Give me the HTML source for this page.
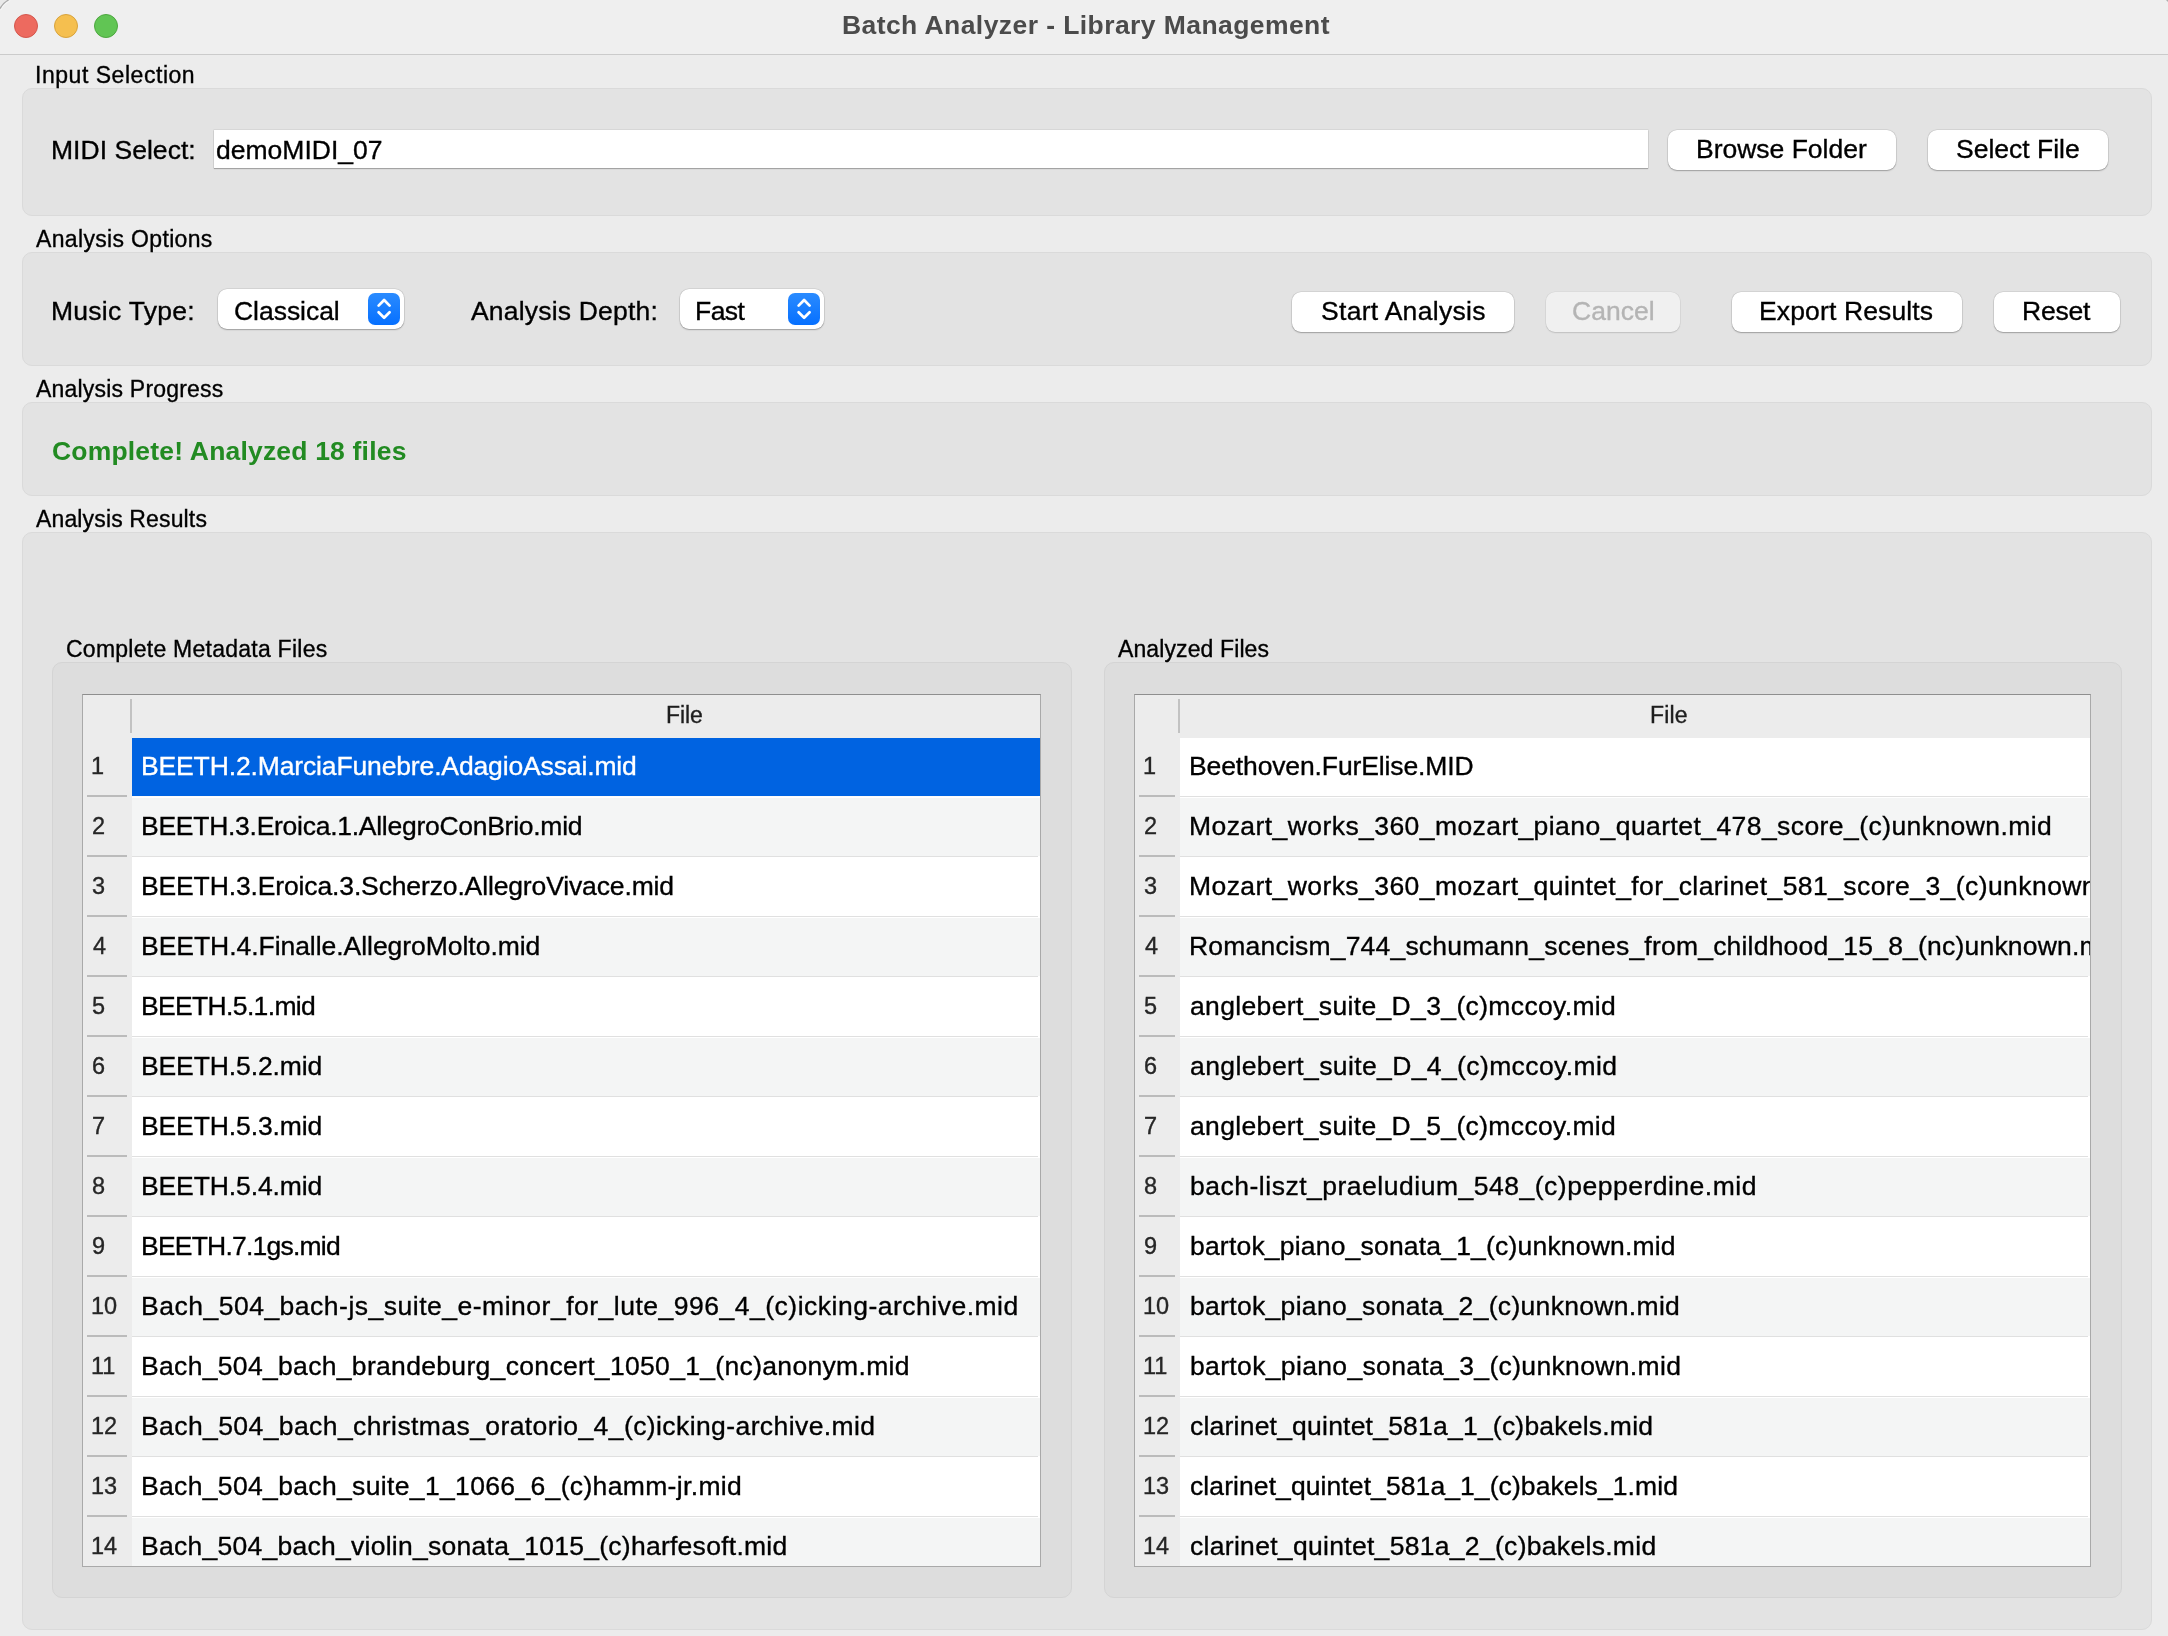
<!DOCTYPE html>
<html><head><meta charset="utf-8"><style>
html,body{margin:0;padding:0}
body{width:2168px;height:1636px;overflow:hidden;position:relative;background:#ececec;font-family:"Liberation Sans",sans-serif}
.t{position:absolute;white-space:nowrap;line-height:normal;will-change:transform;-webkit-text-stroke:0.35px currentColor}
</style></head><body>
<div style="position:absolute;left:0px;top:0px;width:2168px;height:54px;background:#efefef"></div>
<div style="position:absolute;left:0px;top:54px;width:2168px;height:1px;background:#cbcbcb"></div>
<svg style="position:absolute;left:0;top:0" width="24" height="24" viewBox="0 0 24 24"><path d="M0 0 H8.6 A20 20 0 0 0 0 8.6 Z" fill="#e9e9e9"/><path d="M8.6 0 A20 20 0 0 0 0 8.6" fill="none" stroke="#a9a9a9" stroke-width="1.3"/><path d="M10.2 0.6 A19 19 0 0 0 0.6 10.2" fill="none" stroke="#f7f7f7" stroke-width="0.9"/></svg>
<svg style="position:absolute;left:2158px;top:0" width="10" height="10" viewBox="0 0 10 10"><path d="M8.7 0 A20 20 0 0 1 10 1.3 V0 Z" fill="#e9e9e9"/><path d="M8.7 0 A20 20 0 0 1 10 1.3" fill="none" stroke="#a9a9a9" stroke-width="1.3"/></svg>
<div style="position:absolute;left:14px;top:14px;width:24px;height:24px;border-radius:50%;background:#ed6a5f;box-sizing:border-box;border:1px solid #d4574d"></div>
<div style="position:absolute;left:54px;top:14px;width:24px;height:24px;border-radius:50%;background:#f5bf4f;box-sizing:border-box;border:1px solid #d8a33c"></div>
<div style="position:absolute;left:94px;top:14px;width:24px;height:24px;border-radius:50%;background:#61c554;box-sizing:border-box;border:1px solid #4da73f"></div>
<div style="position:absolute;left:22px;top:88px;width:2130px;height:128px;box-sizing:border-box;border:1px solid #dadada;border-radius:10px;background:#e3e3e3"></div>
<div style="position:absolute;left:22px;top:252px;width:2130px;height:114px;box-sizing:border-box;border:1px solid #dadada;border-radius:10px;background:#e3e3e3"></div>
<div style="position:absolute;left:22px;top:402px;width:2130px;height:94px;box-sizing:border-box;border:1px solid #dadada;border-radius:10px;background:#e3e3e3"></div>
<div style="position:absolute;left:22px;top:532px;width:2130px;height:1098px;box-sizing:border-box;border:1px solid #dadada;border-radius:10px;background:#e3e3e3"></div>
<div style="position:absolute;left:52px;top:662px;width:1020px;height:936px;box-sizing:border-box;border:1px solid #d4d4d4;border-radius:10px;background:#dddddd"></div>
<div style="position:absolute;left:1104px;top:662px;width:1018px;height:936px;box-sizing:border-box;border:1px solid #d4d4d4;border-radius:10px;background:#dddddd"></div>
<div style="position:absolute;left:214px;top:130px;width:1434px;height:38px;background:#fff;box-shadow:0 0 0 0.5px rgba(0,0,0,0.10), 0 1px 1px rgba(0,0,0,0.24)"></div>
<div style="position:absolute;left:1668px;top:130px;width:228px;height:40px;border-radius:9px;background:#fff;box-shadow:0 0 0 0.5px rgba(0,0,0,0.10),0 1px 1.5px rgba(0,0,0,0.26),0 0 2px rgba(0,0,0,0.06)"></div>
<div style="position:absolute;left:1928px;top:130px;width:180px;height:40px;border-radius:9px;background:#fff;box-shadow:0 0 0 0.5px rgba(0,0,0,0.10),0 1px 1.5px rgba(0,0,0,0.26),0 0 2px rgba(0,0,0,0.06)"></div>
<div style="position:absolute;left:1292px;top:292px;width:222px;height:40px;border-radius:9px;background:#fff;box-shadow:0 0 0 0.5px rgba(0,0,0,0.10),0 1px 1.5px rgba(0,0,0,0.26),0 0 2px rgba(0,0,0,0.06)"></div>
<div style="position:absolute;left:1546px;top:292px;width:134px;height:40px;border-radius:9px;background:#f0f0f0;box-shadow:0 0 0 0.5px rgba(0,0,0,0.06),0 1px 1.5px rgba(0,0,0,0.13)"></div>
<div style="position:absolute;left:1732px;top:292px;width:230px;height:40px;border-radius:9px;background:#fff;box-shadow:0 0 0 0.5px rgba(0,0,0,0.10),0 1px 1.5px rgba(0,0,0,0.26),0 0 2px rgba(0,0,0,0.06)"></div>
<div style="position:absolute;left:1994px;top:292px;width:126px;height:40px;border-radius:9px;background:#fff;box-shadow:0 0 0 0.5px rgba(0,0,0,0.10),0 1px 1.5px rgba(0,0,0,0.26),0 0 2px rgba(0,0,0,0.06)"></div>
<div style="position:absolute;left:218px;top:289px;width:186px;height:40px;border-radius:9px;background:#fff;box-shadow:0 0 0 0.5px rgba(0,0,0,0.10),0 1px 1.5px rgba(0,0,0,0.26),0 0 2px rgba(0,0,0,0.06)"></div>
<div style="position:absolute;left:368px;top:293px;width:32px;height:32px;border-radius:7px;background:linear-gradient(#2a8bff,#0670ff)"></div>
<svg style="position:absolute;left:368px;top:293px" width="32" height="32" viewBox="0 0 32 32"><path d="M10.6 12.6 L16.1 7.0 L21.6 12.6 M10.6 19.2 L16.1 24.8 L21.6 19.2" fill="none" stroke="#fff" stroke-width="2.7" stroke-linecap="round" stroke-linejoin="round"/></svg>
<div style="position:absolute;left:680px;top:289px;width:144px;height:40px;border-radius:9px;background:#fff;box-shadow:0 0 0 0.5px rgba(0,0,0,0.10),0 1px 1.5px rgba(0,0,0,0.26),0 0 2px rgba(0,0,0,0.06)"></div>
<div style="position:absolute;left:788px;top:293px;width:32px;height:32px;border-radius:7px;background:linear-gradient(#2a8bff,#0670ff)"></div>
<svg style="position:absolute;left:788px;top:293px" width="32" height="32" viewBox="0 0 32 32"><path d="M10.6 12.6 L16.1 7.0 L21.6 12.6 M10.6 19.2 L16.1 24.8 L21.6 19.2" fill="none" stroke="#fff" stroke-width="2.7" stroke-linecap="round" stroke-linejoin="round"/></svg>
<div style="position:absolute;left:82px;top:694px;width:959px;height:873px;box-sizing:border-box;background:#fff;border:1px solid #a9a9a9;border-top-color:#8e8e8e;overflow:hidden"><div style="position:absolute;left:0px;top:0px;width:957px;height:43px;background:#ececec"></div><div style="position:absolute;left:0px;top:43px;width:49px;height:828px;background:#ececec"></div><div style="position:absolute;left:47px;top:4px;width:2px;height:34px;background:#c2c2c2"></div><div style="position:absolute;left:49px;top:43px;width:908px;height:58px;background:#0063e1"></div><div style="position:absolute;left:49px;top:101px;width:906px;height:1px;background:#fbfbfb"></div><div style="position:absolute;left:4px;top:100px;width:40px;height:2px;background:#bbbbbb"></div><div style="position:absolute;left:49px;top:103px;width:908px;height:58px;background:#f4f5f5"></div><div style="position:absolute;left:49px;top:161px;width:906px;height:1px;background:#e0e0e0"></div><div style="position:absolute;left:4px;top:160px;width:40px;height:2px;background:#bbbbbb"></div><div style="position:absolute;left:49px;top:221px;width:906px;height:1px;background:#e0e0e0"></div><div style="position:absolute;left:4px;top:220px;width:40px;height:2px;background:#bbbbbb"></div><div style="position:absolute;left:49px;top:223px;width:908px;height:58px;background:#f4f5f5"></div><div style="position:absolute;left:49px;top:281px;width:906px;height:1px;background:#e0e0e0"></div><div style="position:absolute;left:4px;top:280px;width:40px;height:2px;background:#bbbbbb"></div><div style="position:absolute;left:49px;top:341px;width:906px;height:1px;background:#e0e0e0"></div><div style="position:absolute;left:4px;top:340px;width:40px;height:2px;background:#bbbbbb"></div><div style="position:absolute;left:49px;top:343px;width:908px;height:58px;background:#f4f5f5"></div><div style="position:absolute;left:49px;top:401px;width:906px;height:1px;background:#e0e0e0"></div><div style="position:absolute;left:4px;top:400px;width:40px;height:2px;background:#bbbbbb"></div><div style="position:absolute;left:49px;top:461px;width:906px;height:1px;background:#e0e0e0"></div><div style="position:absolute;left:4px;top:460px;width:40px;height:2px;background:#bbbbbb"></div><div style="position:absolute;left:49px;top:463px;width:908px;height:58px;background:#f4f5f5"></div><div style="position:absolute;left:49px;top:521px;width:906px;height:1px;background:#e0e0e0"></div><div style="position:absolute;left:4px;top:520px;width:40px;height:2px;background:#bbbbbb"></div><div style="position:absolute;left:49px;top:581px;width:906px;height:1px;background:#e0e0e0"></div><div style="position:absolute;left:4px;top:580px;width:40px;height:2px;background:#bbbbbb"></div><div style="position:absolute;left:49px;top:583px;width:908px;height:58px;background:#f4f5f5"></div><div style="position:absolute;left:49px;top:641px;width:906px;height:1px;background:#e0e0e0"></div><div style="position:absolute;left:4px;top:640px;width:40px;height:2px;background:#bbbbbb"></div><div style="position:absolute;left:49px;top:701px;width:906px;height:1px;background:#e0e0e0"></div><div style="position:absolute;left:4px;top:700px;width:40px;height:2px;background:#bbbbbb"></div><div style="position:absolute;left:49px;top:703px;width:908px;height:58px;background:#f4f5f5"></div><div style="position:absolute;left:49px;top:761px;width:906px;height:1px;background:#e0e0e0"></div><div style="position:absolute;left:4px;top:760px;width:40px;height:2px;background:#bbbbbb"></div><div style="position:absolute;left:49px;top:821px;width:906px;height:1px;background:#e0e0e0"></div><div style="position:absolute;left:4px;top:820px;width:40px;height:2px;background:#bbbbbb"></div><div style="position:absolute;left:49px;top:823px;width:908px;height:58px;background:#f4f5f5"></div><div style="position:absolute;left:49px;top:881px;width:906px;height:1px;background:#e0e0e0"></div><div style="position:absolute;left:4px;top:880px;width:40px;height:2px;background:#bbbbbb"></div></div>
<div style="position:absolute;left:1134px;top:694px;width:957px;height:873px;box-sizing:border-box;background:#fff;border:1px solid #a9a9a9;border-top-color:#8e8e8e;overflow:hidden"><div style="position:absolute;left:0px;top:0px;width:955px;height:43px;background:#ececec"></div><div style="position:absolute;left:0px;top:43px;width:45px;height:828px;background:#ececec"></div><div style="position:absolute;left:43px;top:4px;width:2px;height:34px;background:#c2c2c2"></div><div style="position:absolute;left:45px;top:101px;width:908px;height:1px;background:#e0e0e0"></div><div style="position:absolute;left:4px;top:100px;width:36px;height:2px;background:#bbbbbb"></div><div style="position:absolute;left:45px;top:103px;width:910px;height:58px;background:#f4f5f5"></div><div style="position:absolute;left:45px;top:161px;width:908px;height:1px;background:#e0e0e0"></div><div style="position:absolute;left:4px;top:160px;width:36px;height:2px;background:#bbbbbb"></div><div style="position:absolute;left:45px;top:221px;width:908px;height:1px;background:#e0e0e0"></div><div style="position:absolute;left:4px;top:220px;width:36px;height:2px;background:#bbbbbb"></div><div style="position:absolute;left:45px;top:223px;width:910px;height:58px;background:#f4f5f5"></div><div style="position:absolute;left:45px;top:281px;width:908px;height:1px;background:#e0e0e0"></div><div style="position:absolute;left:4px;top:280px;width:36px;height:2px;background:#bbbbbb"></div><div style="position:absolute;left:45px;top:341px;width:908px;height:1px;background:#e0e0e0"></div><div style="position:absolute;left:4px;top:340px;width:36px;height:2px;background:#bbbbbb"></div><div style="position:absolute;left:45px;top:343px;width:910px;height:58px;background:#f4f5f5"></div><div style="position:absolute;left:45px;top:401px;width:908px;height:1px;background:#e0e0e0"></div><div style="position:absolute;left:4px;top:400px;width:36px;height:2px;background:#bbbbbb"></div><div style="position:absolute;left:45px;top:461px;width:908px;height:1px;background:#e0e0e0"></div><div style="position:absolute;left:4px;top:460px;width:36px;height:2px;background:#bbbbbb"></div><div style="position:absolute;left:45px;top:463px;width:910px;height:58px;background:#f4f5f5"></div><div style="position:absolute;left:45px;top:521px;width:908px;height:1px;background:#e0e0e0"></div><div style="position:absolute;left:4px;top:520px;width:36px;height:2px;background:#bbbbbb"></div><div style="position:absolute;left:45px;top:581px;width:908px;height:1px;background:#e0e0e0"></div><div style="position:absolute;left:4px;top:580px;width:36px;height:2px;background:#bbbbbb"></div><div style="position:absolute;left:45px;top:583px;width:910px;height:58px;background:#f4f5f5"></div><div style="position:absolute;left:45px;top:641px;width:908px;height:1px;background:#e0e0e0"></div><div style="position:absolute;left:4px;top:640px;width:36px;height:2px;background:#bbbbbb"></div><div style="position:absolute;left:45px;top:701px;width:908px;height:1px;background:#e0e0e0"></div><div style="position:absolute;left:4px;top:700px;width:36px;height:2px;background:#bbbbbb"></div><div style="position:absolute;left:45px;top:703px;width:910px;height:58px;background:#f4f5f5"></div><div style="position:absolute;left:45px;top:761px;width:908px;height:1px;background:#e0e0e0"></div><div style="position:absolute;left:4px;top:760px;width:36px;height:2px;background:#bbbbbb"></div><div style="position:absolute;left:45px;top:821px;width:908px;height:1px;background:#e0e0e0"></div><div style="position:absolute;left:4px;top:820px;width:36px;height:2px;background:#bbbbbb"></div><div style="position:absolute;left:45px;top:823px;width:910px;height:58px;background:#f4f5f5"></div><div style="position:absolute;left:45px;top:881px;width:908px;height:1px;background:#e0e0e0"></div><div style="position:absolute;left:4px;top:880px;width:36px;height:2px;background:#bbbbbb"></div></div>
<div class="t" id="title" style="left:841.98px;top:10.20px;font-size:26.5px;color:#4b4b4b;letter-spacing:0.421px;font-weight:bold;-webkit-text-stroke:0">Batch Analyzer - Library Management</div>
<div class="t" id="g1" style="left:35.01px;top:62.20px;font-size:23px;color:#000;letter-spacing:0.534px">Input Selection</div>
<div class="t" id="g2" style="left:35.91px;top:226.10px;font-size:23px;color:#000;letter-spacing:0.336px">Analysis Options</div>
<div class="t" id="g3" style="left:35.91px;top:375.70px;font-size:23px;color:#000;letter-spacing:0.203px">Analysis Progress</div>
<div class="t" id="g4" style="left:35.90px;top:505.50px;font-size:23px;color:#000;letter-spacing:0.144px">Analysis Results</div>
<div class="t" id="g5" style="left:65.90px;top:635.90px;font-size:23px;color:#000;letter-spacing:0.250px">Complete Metadata Files</div>
<div class="t" id="g6" style="left:1117.89px;top:635.80px;font-size:23px;color:#000;letter-spacing:0.111px">Analyzed Files</div>
<div class="t" id="midi" style="left:51.02px;top:135.10px;font-size:26.5px;color:#000;letter-spacing:0.033px">MIDI Select:</div>
<div class="t" id="demo" style="left:215.86px;top:134.90px;font-size:26.5px;color:#000;letter-spacing:0.009px">demoMIDI_07</div>
<div class="t" id="browse" style="left:1696.02px;top:134.20px;font-size:26.5px;color:#000;letter-spacing:-0.008px">Browse Folder</div>
<div class="t" id="selfile" style="left:1955.90px;top:134.00px;font-size:26.5px;color:#000;letter-spacing:0.000px">Select File</div>
<div class="t" id="mtype" style="left:51.00px;top:296.30px;font-size:26.5px;color:#000;letter-spacing:0.270px">Music Type:</div>
<div class="t" id="classical" style="left:233.87px;top:296.00px;font-size:26.5px;color:#000;letter-spacing:-0.034px">Classical</div>
<div class="t" id="adepth" style="left:470.93px;top:296.00px;font-size:26.5px;color:#000;letter-spacing:0.193px">Analysis Depth:</div>
<div class="t" id="fast" style="left:695.00px;top:296.00px;font-size:26.5px;color:#000;letter-spacing:-0.540px">Fast</div>
<div class="t" id="start" style="left:1320.85px;top:295.80px;font-size:26.5px;color:#000;letter-spacing:0.298px">Start Analysis</div>
<div class="t" id="cancel" style="left:1571.86px;top:296.00px;font-size:26.5px;color:#b4b4b4;letter-spacing:0.018px">Cancel</div>
<div class="t" id="export" style="left:1759.03px;top:295.60px;font-size:26.5px;color:#000;letter-spacing:0.132px">Export Results</div>
<div class="t" id="reset" style="left:2021.98px;top:296.00px;font-size:26.5px;color:#000;letter-spacing:-0.247px">Reset</div>
<div class="t" id="complete" style="left:51.86px;top:436.00px;font-size:26.5px;color:#228b22;letter-spacing:0.187px;font-weight:bold;-webkit-text-stroke:0">Complete! Analyzed 18 files</div>
<div class="t" id="hfile1" style="left:665.97px;top:701.70px;font-size:23px;color:#1e1e1e;letter-spacing:-0.090px">File</div>
<div class="t" id="hfile2" style="left:1650.05px;top:701.80px;font-size:23px;color:#1e1e1e;letter-spacing:0.120px">File</div>
<div class="t" id="ln0" style="left:90.98px;top:752.80px;font-size:23.5px;color:#262626;letter-spacing:0.000px">1</div>
<div class="t" id="rn0" style="left:1142.96px;top:752.80px;font-size:23.5px;color:#262626;letter-spacing:0.000px">1</div>
<div class="t" id="lt0" style="left:141.04px;top:750.80px;font-size:26.5px;color:#fff;letter-spacing:-0.138px;width:898.96px;overflow:hidden;height:40px">BEETH.2.MarciaFunebre.AdagioAssai.mid</div>
<div class="t" id="rt0" style="left:1188.98px;top:750.80px;font-size:26.5px;color:#000;letter-spacing:-0.124px;width:901.02px;overflow:hidden;height:40px">Beethoven.FurElise.MID</div>
<div class="t" id="ln1" style="left:91.88px;top:812.80px;font-size:23.5px;color:#262626;letter-spacing:0.000px">2</div>
<div class="t" id="rn1" style="left:1143.86px;top:812.80px;font-size:23.5px;color:#262626;letter-spacing:0.000px">2</div>
<div class="t" id="lt1" style="left:141.04px;top:810.80px;font-size:26.5px;color:#000;letter-spacing:-0.270px;width:898.96px;overflow:hidden;height:40px">BEETH.3.Eroica.1.AllegroConBrio.mid</div>
<div class="t" id="rt1" style="left:1188.98px;top:810.80px;font-size:26.5px;color:#000;letter-spacing:0.428px;width:901.02px;overflow:hidden;height:40px">Mozart_works_360_mozart_piano_quartet_478_score_(c)unknown.mid</div>
<div class="t" id="ln2" style="left:91.88px;top:872.80px;font-size:23.5px;color:#262626;letter-spacing:0.000px">3</div>
<div class="t" id="rn2" style="left:1143.86px;top:872.80px;font-size:23.5px;color:#262626;letter-spacing:0.000px">3</div>
<div class="t" id="lt2" style="left:141.04px;top:870.80px;font-size:26.5px;color:#000;letter-spacing:-0.134px;width:898.96px;overflow:hidden;height:40px">BEETH.3.Eroica.3.Scherzo.AllegroVivace.mid</div>
<div class="t" id="rt2" style="left:1188.98px;top:870.80px;font-size:26.5px;color:#000;letter-spacing:0.427px;width:901.02px;overflow:hidden;height:40px">Mozart_works_360_mozart_quintet_for_clarinet_581_score_3_(c)unknown.mid</div>
<div class="t" id="ln3" style="left:92.78px;top:932.80px;font-size:23.5px;color:#262626;letter-spacing:0.000px">4</div>
<div class="t" id="rn3" style="left:1144.76px;top:932.80px;font-size:23.5px;color:#262626;letter-spacing:0.000px">4</div>
<div class="t" id="lt3" style="left:141.04px;top:930.80px;font-size:26.5px;color:#000;letter-spacing:-0.041px;width:898.96px;overflow:hidden;height:40px">BEETH.4.Finalle.AllegroMolto.mid</div>
<div class="t" id="rt3" style="left:1188.98px;top:930.80px;font-size:26.5px;color:#000;letter-spacing:0.203px;width:901.02px;overflow:hidden;height:40px">Romancism_744_schumann_scenes_from_childhood_15_8_(nc)unknown.mid</div>
<div class="t" id="ln4" style="left:91.88px;top:992.80px;font-size:23.5px;color:#262626;letter-spacing:0.000px">5</div>
<div class="t" id="rn4" style="left:1143.86px;top:992.80px;font-size:23.5px;color:#262626;letter-spacing:0.000px">5</div>
<div class="t" id="lt4" style="left:141.04px;top:990.80px;font-size:26.5px;color:#000;letter-spacing:-0.652px;width:898.96px;overflow:hidden;height:40px">BEETH.5.1.mid</div>
<div class="t" id="rt4" style="left:1189.88px;top:990.80px;font-size:26.5px;color:#000;letter-spacing:0.354px;width:900.12px;overflow:hidden;height:40px">anglebert_suite_D_3_(c)mccoy.mid</div>
<div class="t" id="ln5" style="left:91.88px;top:1052.80px;font-size:23.5px;color:#262626;letter-spacing:0.000px">6</div>
<div class="t" id="rn5" style="left:1143.86px;top:1052.80px;font-size:23.5px;color:#262626;letter-spacing:0.000px">6</div>
<div class="t" id="lt5" style="left:141.04px;top:1050.80px;font-size:26.5px;color:#000;letter-spacing:-0.113px;width:898.96px;overflow:hidden;height:40px">BEETH.5.2.mid</div>
<div class="t" id="rt5" style="left:1189.88px;top:1050.80px;font-size:26.5px;color:#000;letter-spacing:0.389px;width:900.12px;overflow:hidden;height:40px">anglebert_suite_D_4_(c)mccoy.mid</div>
<div class="t" id="ln6" style="left:91.88px;top:1112.80px;font-size:23.5px;color:#262626;letter-spacing:0.000px">7</div>
<div class="t" id="rn6" style="left:1143.86px;top:1112.80px;font-size:23.5px;color:#262626;letter-spacing:0.000px">7</div>
<div class="t" id="lt6" style="left:141.04px;top:1110.80px;font-size:26.5px;color:#000;letter-spacing:-0.113px;width:898.96px;overflow:hidden;height:40px">BEETH.5.3.mid</div>
<div class="t" id="rt6" style="left:1189.88px;top:1110.80px;font-size:26.5px;color:#000;letter-spacing:0.354px;width:900.12px;overflow:hidden;height:40px">anglebert_suite_D_5_(c)mccoy.mid</div>
<div class="t" id="ln7" style="left:91.88px;top:1172.80px;font-size:23.5px;color:#262626;letter-spacing:0.000px">8</div>
<div class="t" id="rn7" style="left:1143.86px;top:1172.80px;font-size:23.5px;color:#262626;letter-spacing:0.000px">8</div>
<div class="t" id="lt7" style="left:141.04px;top:1170.80px;font-size:26.5px;color:#000;letter-spacing:-0.113px;width:898.96px;overflow:hidden;height:40px">BEETH.5.4.mid</div>
<div class="t" id="rt7" style="left:1189.88px;top:1170.80px;font-size:26.5px;color:#000;letter-spacing:0.510px;width:900.12px;overflow:hidden;height:40px">bach-liszt_praeludium_548_(c)pepperdine.mid</div>
<div class="t" id="ln8" style="left:91.88px;top:1232.80px;font-size:23.5px;color:#262626;letter-spacing:0.000px">9</div>
<div class="t" id="rn8" style="left:1143.86px;top:1232.80px;font-size:23.5px;color:#262626;letter-spacing:0.000px">9</div>
<div class="t" id="lt8" style="left:141.04px;top:1230.80px;font-size:26.5px;color:#000;letter-spacing:-0.778px;width:898.96px;overflow:hidden;height:40px">BEETH.7.1gs.mid</div>
<div class="t" id="rt8" style="left:1189.88px;top:1230.80px;font-size:26.5px;color:#000;letter-spacing:0.195px;width:900.12px;overflow:hidden;height:40px">bartok_piano_sonata_1_(c)unknown.mid</div>
<div class="t" id="ln9" style="left:90.98px;top:1292.80px;font-size:23.5px;color:#262626;letter-spacing:0.000px">10</div>
<div class="t" id="rn9" style="left:1142.96px;top:1292.80px;font-size:23.5px;color:#262626;letter-spacing:0.000px">10</div>
<div class="t" id="lt9" style="left:141.04px;top:1290.80px;font-size:26.5px;color:#000;letter-spacing:0.503px;width:898.96px;overflow:hidden;height:40px">Bach_504_bach-js_suite_e-minor_for_lute_996_4_(c)icking-archive.mid</div>
<div class="t" id="rt9" style="left:1189.88px;top:1290.80px;font-size:26.5px;color:#000;letter-spacing:0.316px;width:900.12px;overflow:hidden;height:40px">bartok_piano_sonata_2_(c)unknown.mid</div>
<div class="t" id="ln10" style="left:90.98px;top:1352.80px;font-size:23.5px;color:#262626;letter-spacing:0.000px">11</div>
<div class="t" id="rn10" style="left:1142.96px;top:1352.80px;font-size:23.5px;color:#262626;letter-spacing:0.000px">11</div>
<div class="t" id="lt10" style="left:141.04px;top:1350.80px;font-size:26.5px;color:#000;letter-spacing:0.324px;width:898.96px;overflow:hidden;height:40px">Bach_504_bach_brandeburg_concert_1050_1_(nc)anonym.mid</div>
<div class="t" id="rt10" style="left:1189.88px;top:1350.80px;font-size:26.5px;color:#000;letter-spacing:0.347px;width:900.12px;overflow:hidden;height:40px">bartok_piano_sonata_3_(c)unknown.mid</div>
<div class="t" id="ln11" style="left:90.98px;top:1412.80px;font-size:23.5px;color:#262626;letter-spacing:0.000px">12</div>
<div class="t" id="rn11" style="left:1142.96px;top:1412.80px;font-size:23.5px;color:#262626;letter-spacing:0.000px">12</div>
<div class="t" id="lt11" style="left:141.04px;top:1410.80px;font-size:26.5px;color:#000;letter-spacing:0.412px;width:898.96px;overflow:hidden;height:40px">Bach_504_bach_christmas_oratorio_4_(c)icking-archive.mid</div>
<div class="t" id="rt11" style="left:1189.88px;top:1410.80px;font-size:26.5px;color:#000;letter-spacing:0.217px;width:900.12px;overflow:hidden;height:40px">clarinet_quintet_581a_1_(c)bakels.mid</div>
<div class="t" id="ln12" style="left:90.98px;top:1472.80px;font-size:23.5px;color:#262626;letter-spacing:0.000px">13</div>
<div class="t" id="rn12" style="left:1142.96px;top:1472.80px;font-size:23.5px;color:#262626;letter-spacing:0.000px">13</div>
<div class="t" id="lt12" style="left:141.04px;top:1470.80px;font-size:26.5px;color:#000;letter-spacing:0.345px;width:898.96px;overflow:hidden;height:40px">Bach_504_bach_suite_1_1066_6_(c)hamm-jr.mid</div>
<div class="t" id="rt12" style="left:1189.88px;top:1470.80px;font-size:26.5px;color:#000;letter-spacing:0.085px;width:900.12px;overflow:hidden;height:40px">clarinet_quintet_581a_1_(c)bakels_1.mid</div>
<div class="t" id="ln13" style="left:90.98px;top:1532.80px;font-size:23.5px;color:#262626;letter-spacing:0.000px">14</div>
<div class="t" id="rn13" style="left:1142.96px;top:1532.80px;font-size:23.5px;color:#262626;letter-spacing:0.000px">14</div>
<div class="t" id="lt13" style="left:141.04px;top:1530.80px;font-size:26.5px;color:#000;letter-spacing:0.266px;width:898.96px;overflow:hidden;height:40px">Bach_504_bach_violin_sonata_1015_(c)harfesoft.mid</div>
<div class="t" id="rt13" style="left:1189.88px;top:1530.80px;font-size:26.5px;color:#000;letter-spacing:0.305px;width:900.12px;overflow:hidden;height:40px">clarinet_quintet_581a_2_(c)bakels.mid</div>
</body></html>
